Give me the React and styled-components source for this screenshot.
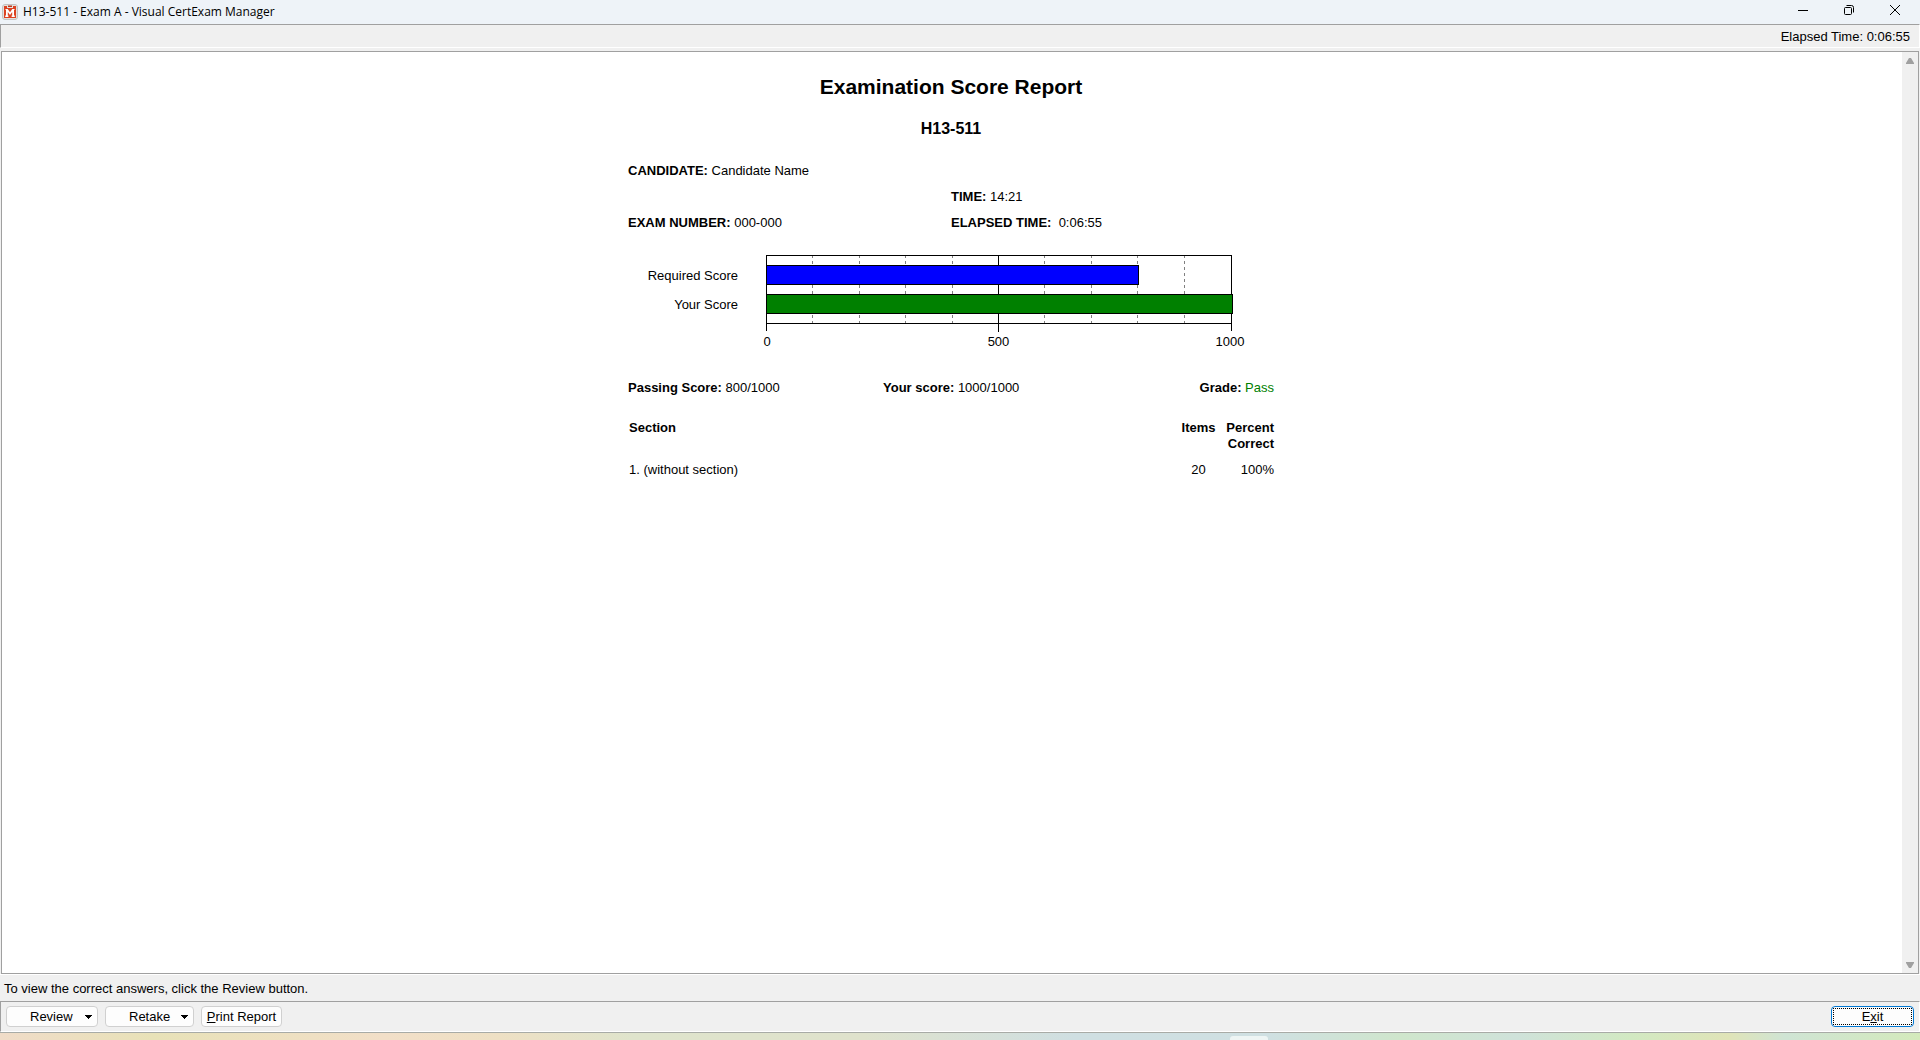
import React from "react";
import styled, { createGlobalStyle } from "styled-components";

const GlobalStyle = createGlobalStyle`
  * {
    box-sizing: border-box;
  }
  body {
    margin: 0;
    font-family: "Liberation Sans", Arial, sans-serif;
    font-size: 13px;
    line-height: 16px;
    color: #000;
    background: #f0f0f0;
  }
`;

const Window = styled.div`
  display: flex;
  flex-direction: column;
  min-height: 100vh;
`;

const TitleBar = styled.header`
  display: flex;
  align-items: center;
  height: 24px;
  padding: 0 2px;
  background: #eef3f8;
  font-family: "Open Sans", "Noto Sans", sans-serif;
  font-size: 12px;
`;

const AppTitle = styled.span`
  flex: 1;
  padding-left: 4px;
`;

const CaptionButton = styled.button`
  display: flex;
  align-items: center;
  justify-content: center;
  width: 46px;
  height: 24px;
  padding: 0 0 4px;
  border: 0;
  background: none;
`;

const InfoBar = styled.div`
  display: flex;
  align-items: center;
  justify-content: flex-end;
  height: 24px;
  padding: 1px 9px 0 0;
  border: 1px solid #a0a0a0;
  border-right-color: #fff;
  border-bottom-color: #fff;
`;

const Viewport = styled.main`
  display: flex;
  flex: 1;
  margin: 3px 1px 0;
  border: 1px solid #a0a0a0;
  background: #fff;
`;

const Page = styled.div`
  flex: 1;
  padding: 23px 2px 0 0;
`;

const ScrollBar = styled.div`
  display: flex;
  flex-direction: column;
  justify-content: space-between;
  width: 16px;
  background: #f0f0f0;
`;

const ScrollButton = styled.button`
  display: flex;
  align-items: center;
  justify-content: center;
  width: 16px;
  height: 17px;
  padding: 0;
  border: 0;
  background: none;
`;

const Report = styled.article`
  width: 646px;
  max-width: 100%;
  margin: 0 auto;
`;

const ReportTitle = styled.h1`
  margin: 0;
  font-size: 21px;
  line-height: 24px;
  text-align: center;
`;

const ExamCode = styled.h2`
  margin: 19px 0 18px;
  font-size: 16px;
  line-height: 22px;
  text-align: center;
`;

const Details = styled.div`
  display: grid;
  grid-template-columns: 1fr 1fr;
  line-height: 26px;
`;

const Chart = styled.section`
  display: grid;
  grid-template-columns: 110px 467px;
  column-gap: 28px;
  padding-top: 19px;
`;

const BarLabels = styled.div`
  padding-top: 6px;
  line-height: 29px;
  text-align: right;
`;

const Plot = styled.svg`
  display: block;
`;

const Axis = styled.div`
  display: flex;
  justify-content: space-between;
  grid-column: 2;
  margin: 2px -14px 0 -16px;

  span {
    width: 34px;
    text-align: center;
  }
`;

const Summary = styled.div`
  display: grid;
  grid-template-columns: 255px 1fr auto;
  padding: 30px 0 24px;
`;

const Grade = styled.span`
  color: #008000;
`;

const Sections = styled.table`
  width: 100%;
  border-collapse: collapse;

  th,
  td {
    padding: 0 0 10px 1px;
    text-align: left;
    vertical-align: top;
  }
  th:nth-child(2),
  td:nth-child(2) {
    width: 36px;
    text-align: center;
  }
  th:nth-child(3),
  td:nth-child(3) {
    width: 58px;
    text-align: right;
  }
`;

const StatusBar = styled.div`
  height: 27px;
  padding: 6px 4px 0;
  border-top: 1px solid #fff;
`;

const ButtonBar = styled.footer`
  display: flex;
  align-items: center;
  gap: 7px;
  height: 31px;
  padding: 0 5px;
  border: 1px solid #a0a0a0;
  border-right-color: #fff;
  border-bottom-color: #fff;
`;

const Button = styled.button`
  display: flex;
  align-items: center;
  justify-content: center;
  width: ${(props) => props.$width}px;
  height: 21px;
  padding: 0;
  border: 1px solid #d0d0d0;
  border-radius: 4px;
  background: #fdfdfd;
  color: #000;
  font: inherit;
`;

const MenuButton = styled(Button)`
  justify-content: space-between;
  padding: 1px 5px 0 23px;
`;

const ExitButton = styled(Button)`
  margin-left: auto;
  border-color: #0078d4;
`;

const FocusedLabel = styled.span`
  flex: 1;
  margin: 0 1px;
  border: 1px dotted #000;
  line-height: 15px;
`;

const Desktop = styled.div`
  display: flex;
  height: 8px;
  padding-left: 64%;
  border-top: 1px solid #a8aba6;
  background: linear-gradient(
    90deg,
    #f0dcc8,
    #e8e2b8 8%,
    #f2dfc8 20%,
    #eee0c4 26%,
    #dfe4cc 33%,
    #dfe2cc 45%,
    #cfdfe2 56%,
    #cfe0e2 66%,
    #cfe6cc 73%,
    #cfe2da 79%,
    #d2e9c2 85%,
    #e0e4b8 90%,
    #cfe4d4 93%,
    #d4eabc
  );
`;

const TaskbarHandle = styled.div`
  width: 38px;
  height: 4px;
  margin: 3px 0 0 1px;
  border-radius: 3px 3px 0 0;
  background: #eef5f4;
`;

const sections = [{ name: "1. (without section)", items: 20, percent: "100%" }];

const bars = [
  { score: 800, color: "#0000ff" },
  { score: 1000, color: "#008000" },
];

const xFor = (score) => Math.round(score * 0.464);

const ScoreChart = () => (
  <Plot width="467" height="77" shapeRendering="crispEdges" role="img" aria-label="Score chart">
    {[100, 200, 300, 400, 600, 700, 800, 900].map((score) => (
      <line
        key={score}
        x1={xFor(score) + 0.5}
        x2={xFor(score) + 0.5}
        y1="0"
        y2="68"
        stroke="#808080"
        strokeDasharray="3 3"
      />
    ))}
    <path d="M.5 76V.5H465.5V76M.5 68.5H465.5M232.5 0V77" fill="none" stroke="#000" />
    {bars.map((bar, i) => (
      <rect
        key={bar.score}
        x="0.5"
        y={10.5 + i * 29}
        width={Math.floor(bar.score * 0.466)}
        height="19"
        fill={bar.color}
        stroke="#000"
      />
    ))}
  </Plot>
);

const Logo = () => (
  <svg width="17" height="17" viewBox="0 0 17 17">
    <rect x="0.5" y="0.5" width="15" height="15" rx="2.5" fill="#e4e0de" stroke="#c3c3c3" />
    <path d="M2 2H5V4H11V2H14V14H2Z" fill="#dc4222" />
    <path d="M6 1.5H10V3H6Z" fill="#b83a20" />
    <path d="M3.5 5H5.7L8 8.2L10.3 5H12.5V6H12V11.5H12.8V13H9.6V11.5H10.2V8L8 11L5.8 8V11.5H6.4V13H3.2V11.5H4V6H3.5Z" fill="#fff" />
  </svg>
);

const Triangle = ({ up }) => (
  <svg width="8" height="6" viewBox="0 0 8 6">
    <path d={up ? "M0 6V5L3 0H5L8 5V6Z" : "M0 0V1L3 6H5L8 1V0Z"} fill="#a0a0a0" />
  </svg>
);

const DropArrow = () => (
  <svg width="7" height="4" shapeRendering="crispEdges">
    <path d="M0 0H7V1H6V2H5V3H4V4H3V3H2V2H1V1H0Z" />
  </svg>
);

const App = () => {
  return (
    <Window>
      <GlobalStyle />
      <TitleBar>
        <Logo />
        <AppTitle>H13-511 - Exam A - Visual CertExam Manager</AppTitle>
        <CaptionButton aria-label="Minimize">
          <svg width="10" height="10">
            <path d="M0 5.5H10" stroke="#000" />
          </svg>
        </CaptionButton>
        <CaptionButton aria-label="Restore">
          <svg width="10" height="10" fill="none" stroke="#000">
            <rect x="0.5" y="2.5" width="7" height="7" rx="1" />
            <path d="M2.5 .5H7.5Q9.5 .5 9.5 2.5V7.5" />
          </svg>
        </CaptionButton>
        <CaptionButton aria-label="Close">
          <svg width="10" height="10">
            <path d="M0 0L10 10M10 0L0 10" stroke="#000" />
          </svg>
        </CaptionButton>
      </TitleBar>
      <InfoBar>Elapsed Time: 0:06:55</InfoBar>

      <Viewport>
        <Page>
          <Report>
            <ReportTitle>Examination Score Report</ReportTitle>
            <ExamCode>H13-511</ExamCode>
            <Details>
              <div>
                <b>CANDIDATE:</b> Candidate Name
              </div>
              <div />
              <div />
              <div>
                <b>TIME:</b> 14:21
              </div>
              <div>
                <b>EXAM NUMBER:</b> 000-000
              </div>
              <div>
                <b>ELAPSED TIME:</b>&nbsp; 0:06:55
              </div>
            </Details>

            <Chart>
              <BarLabels>
                <div>Required Score</div>
                <div>Your Score</div>
              </BarLabels>
              <ScoreChart />
              <Axis>
                <span>0</span>
                <span>500</span>
                <span>1000</span>
              </Axis>
            </Chart>

            <Summary>
              <div>
                <b>Passing Score:</b> 800/1000
              </div>
              <div>
                <b>Your score:</b> 1000/1000
              </div>
              <div>
                <b>Grade:</b> <Grade>Pass</Grade>
              </div>
            </Summary>

            <Sections>
              <thead>
                <tr>
                  <th>Section</th>
                  <th>Items</th>
                  <th>Percent Correct</th>
                </tr>
              </thead>
              <tbody>
                {sections.map((section) => (
                  <tr key={section.name}>
                    <td>{section.name}</td>
                    <td>{section.items}</td>
                    <td>{section.percent}</td>
                  </tr>
                ))}
              </tbody>
            </Sections>
          </Report>
        </Page>
        <ScrollBar>
          <ScrollButton aria-label="Scroll up">
            <Triangle up />
          </ScrollButton>
          <ScrollButton aria-label="Scroll down">
            <Triangle />
          </ScrollButton>
        </ScrollBar>
      </Viewport>

      <StatusBar>To view the correct answers, click the Review button.</StatusBar>
      <ButtonBar>
        <MenuButton $width={92}>
          Review <DropArrow />
        </MenuButton>
        <MenuButton $width={89}>
          Retake <DropArrow />
        </MenuButton>
        <Button $width={81}>
          <span>
            <u>P</u>rint Report
          </span>
        </Button>
        <ExitButton $width={83}>
          <FocusedLabel>
            E<u>x</u>it
          </FocusedLabel>
        </ExitButton>
      </ButtonBar>
      <Desktop>
        <TaskbarHandle />
      </Desktop>
    </Window>
  );
};

export default App;
